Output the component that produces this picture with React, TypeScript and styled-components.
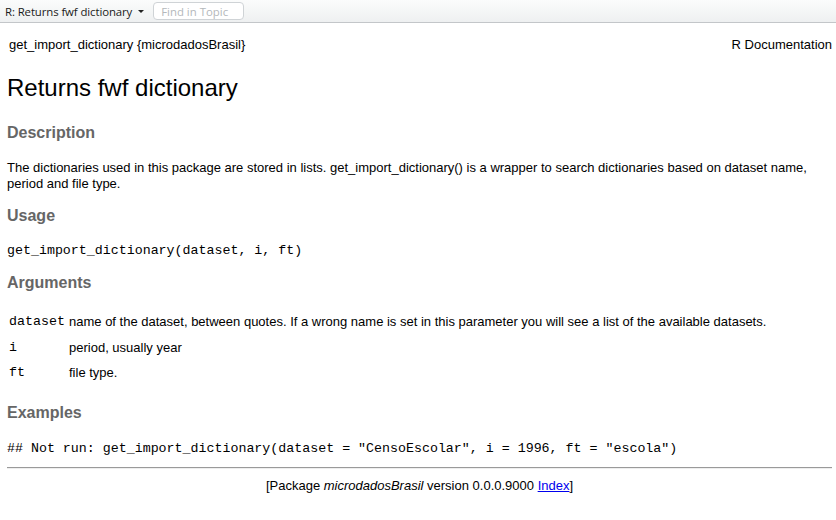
import React from "react";
import styled, { createGlobalStyle } from "styled-components";

const Global = createGlobalStyle`
  html, body { margin: 0; padding: 0; background: #fff; }
  body { font-family: "Liberation Sans", Arial, sans-serif; color: #000; }
  * { box-sizing: border-box; }
`;

const Toolbar = styled.div`
  height: 23px;
  display: flex;
  align-items: center;
  gap: 9px;
  padding: 0 5px;
  background: linear-gradient(#fbfcfc, #eef0f1);
  border-bottom: 1px solid #c3c6c9;
`;

const TopicMenu = styled.div`
  display: flex;
  align-items: center;
  gap: 6px;
  font-family: "Open Sans", "DejaVu Sans", sans-serif;
  font-size: 11.4px;
  color: #1a1a1a;
  letter-spacing: -0.1px;
`;

const Caret = styled.span`
  width: 0;
  height: 0;
  border-left: 3px solid transparent;
  border-right: 3px solid transparent;
  border-top: 3px solid #222;
`;

const Search = styled.div`
  width: 91px;
  height: 18px;
  border: 1px solid #cfd3d6;
  border-radius: 4px;
  background: #fff;
  display: flex;
  align-items: center;
  padding-left: 7px;
  font-family: "Open Sans", "DejaVu Sans", sans-serif;
  font-size: 11.4px;
  color: #b4b8bb;
`;

const Page = styled.div`
  padding: 14px 0 0 7px;
  margin-right: 4px;
  font-size: 13px;
`;

const HeaderRow = styled.div`
  display: flex;
  justify-content: space-between;
  font-size: 13px;
  line-height: 16px;
  padding-left: 2px;
`;

const Title = styled.h1`
  font-size: 24px;
  font-weight: normal;
  margin: 21px 0 0;
  line-height: 28px;
`;

const H2 = styled.h2<{ $top: number }>`
  font-size: 16px;
  font-weight: bold;
  color: #666;
  margin: ${(p) => p.$top}px 0 0;
  line-height: 20px;
`;

const Para = styled.p<{ $top: number }>`
  margin: ${(p) => p.$top}px 0 0;
  line-height: 16px;
  font-size: 13px;
`;

const Code = styled.pre<{ $top: number }>`
  margin: ${(p) => p.$top}px 0 0;
  font-family: "Liberation Mono", "Courier New", monospace;
  font-size: 13.3px;
  line-height: 16px;
`;

const ArgTable = styled.div`
  display: grid;
  grid-template-columns: 60px 1fr;
  row-gap: 9.5px;
  margin: 21px 0 0 2px;
  line-height: 16px;
  font-size: 13px;
`;

const ArgName = styled.span`
  font-family: "Liberation Mono", "Courier New", monospace;
  font-size: 13.3px;
`;

const Rule = styled.hr`
  border: 0;
  border-top: 1px solid #9a9a9a;
  border-bottom: 1px solid #eee;
  margin: 10px 0 0;
`;

const Footer = styled.div`
  text-align: center;
  font-size: 13px;
  line-height: 16px;
  margin-top: 9px;
  a { color: #00e; }
`;

export default function App() {
  return (
    <>
      <Global />
      <Toolbar>
        <TopicMenu>
          R: Returns fwf dictionary <Caret />
        </TopicMenu>
        <Search>Find in Topic</Search>
      </Toolbar>
      <Page>
        <HeaderRow>
          <span>get_import_dictionary {"{microdadosBrasil}"}</span>
          <span>R Documentation</span>
        </HeaderRow>
        <Title>Returns fwf dictionary</Title>
        <H2 $top={21}>Description</H2>
        <Para $top={17}>
          The dictionaries used in this package are stored in lists. get_import_dictionary() is a wrapper to search dictionaries based on dataset name,
          <br />
          period and file type.
        </Para>
        <H2 $top={14}>Usage</H2>
        <Code $top={17}>get_import_dictionary(dataset, i, ft)</Code>
        <H2 $top={14}>Arguments</H2>
        <ArgTable>
          <ArgName>dataset</ArgName>
          <span>name of the dataset, between quotes. If a wrong name is set in this parameter you will see a list of the available datasets.</span>
          <ArgName>i</ArgName>
          <span>period, usually year</span>
          <ArgName>ft</ArgName>
          <span>file type.</span>
        </ArgTable>
        <H2 $top={22}>Examples</H2>
        <Code $top={18}>## Not run: get_import_dictionary(dataset = "CensoEscolar", i = 1996, ft = "escola")</Code>
        <Rule />
        <Footer>
          [Package <i>microdadosBrasil</i> version 0.0.0.9000 <a href="#">Index</a>]
        </Footer>
      </Page>
    </>
  );
}
